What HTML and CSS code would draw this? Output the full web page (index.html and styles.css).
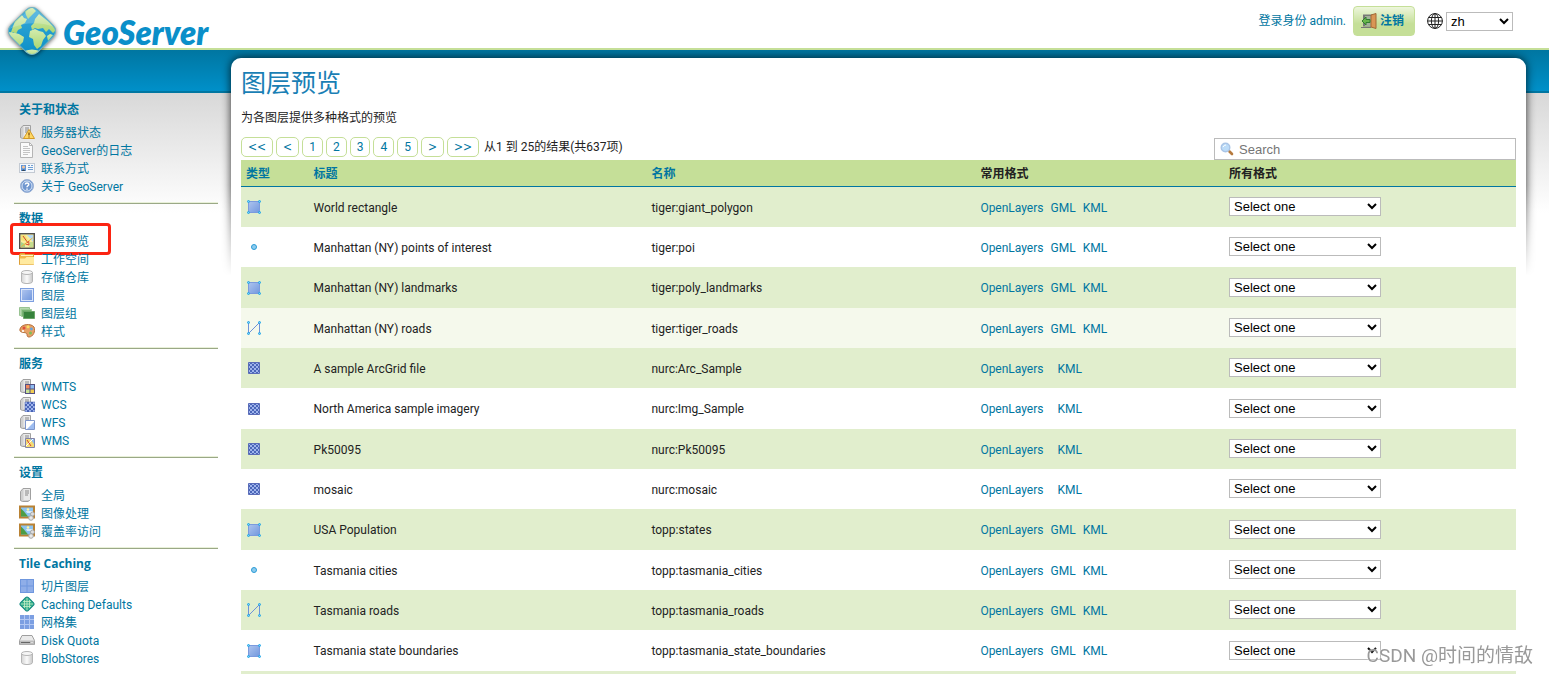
FILE: index.html
```html
<!DOCTYPE html>
<html lang="zh">
<head>
<meta charset="utf-8">
<title>GeoServer: 图层预览</title>
<link rel="stylesheet" href="styles.css">
</head>
<body>
<svg class="defs" aria-hidden="true">
  <defs>
    <linearGradient id="g-blue" x1="0" y1="0" x2="1" y2="1"><stop offset="0" stop-color="#aec4ee"/><stop offset="1" stop-color="#7298de"/></linearGradient>
    <linearGradient id="g-grey" x1="0" y1="0" x2="1" y2="0"><stop offset="0" stop-color="#d4d4d4"/><stop offset=".5" stop-color="#fafafa"/><stop offset="1" stop-color="#c8c8c8"/></linearGradient>
    <linearGradient id="g-sea" x1="0" y1="0" x2="0" y2="1"><stop offset="0" stop-color="#3aabda"/><stop offset="1" stop-color="#0a8ec6"/></linearGradient>
    <linearGradient id="g-land" x1="0" y1="0" x2="0" y2="1"><stop offset="0" stop-color="#d3ecae"/><stop offset="1" stop-color="#a9d672"/></linearGradient>
    <pattern id="p-check" width="4" height="4" patternUnits="userSpaceOnUse"><rect width="4" height="4" fill="#4a66b8"/><path d="M0 0h2v2H0zM2 2h2v2H2z" fill="#9fb4ec"/></pattern>
    <clipPath id="c-globe"><rect x="6" y="6" width="38" height="38" rx="8" transform="rotate(45 25 25)"/></clipPath>
    <symbol id="server" viewBox="0 0 16 16"><path d="M1.500 4.500 4 1.500h7.500v11L9 14.500H3.500l-2-1z" fill="#cfcfcf" stroke="#a0a0a0"/><path d="M4.500 2h6.500v11H4.500z" fill="#e9e9e9"/><path d="M6 4h4M6 6h4M6 8h3" stroke="#888"/></symbol>
    <symbol id="status" viewBox="0 0 16 16"><use href="#server"/><path d="M10 5.500 15.500 14.500H4.500z" fill="#ffd863" stroke="#d39a26" stroke-linejoin="round"/><path d="M10 8.500v3M10 12.500v1" stroke="#7d4b08" stroke-width="1.300"/></symbol>
    <symbol id="page" viewBox="0 0 16 16"><path d="M1.500.5h9l3 3v12h-12z" fill="#fafafa" stroke="#b5b5b5"/><path d="M10.500.5v3h3" fill="none" stroke="#b5b5b5"/><path d="M4 4.500h5M4 6.500h7M4 8.500h7M4 10.500h7M4 12.500h5" stroke="#c4c4c4"/></symbol>
    <symbol id="card" viewBox="0 0 16 16"><rect x=".5" y="3.500" width="15" height="9" fill="#f5f8fc" stroke="#c3cad3"/><rect x="2" y="5" width="5" height="6" fill="#5d96db"/><circle cx="4.500" cy="7" r="1.500" fill="#f5c49a"/><path d="M2.500 11q2-3 4 0z" fill="#345"/><path d="M9 5.500h2M12 5.500h2M9 7.500h5M9 9.500h5" stroke="#6f9fd3"/></symbol>
    <symbol id="help" viewBox="0 0 16 16"><circle cx="8" cy="8" r="6.500" fill="#6f96cf" stroke="#9db3d6"/><circle cx="8" cy="8" r="5" fill="none" stroke="#dbe7f8"/><path d="M6.300 6.500c.2-2.300 3.600-2 3.400.1C9.600 7.800 8 7.800 8 9.200M8 10.500v1.300" fill="none" stroke="#fff" stroke-width="1.500"/></symbol>
    <symbol id="map" viewBox="0 0 16 16"><rect x=".7" y=".7" width="14.600" height="14.600" fill="#f8ec9c" stroke="#4f4f4f" stroke-width="1.400"/><path d="M8 2h6v7z" fill="#b4d9f4"/><path d="M2 2h4l3 5-4 1-3-1z" fill="#f3e277"/><path d="M2 9l4 2v3H2z" fill="#a9d18a"/><path d="M11 9h3v5h-4z" fill="#c4dd8e"/><path d="M2.500 13.500 13.500 5" stroke="#f4b733"/><path d="M4 3l5 7M6.500 11l3.500 1-.3-4" fill="none" stroke="#d6452c"/></symbol>
    <symbol id="folder" viewBox="0 0 16 16"><path d="M.5 3.500 1.500 2.500h4l1 1h8v10H.5z" fill="#f2b84b" stroke="#dd9f37"/><path d="M1 7.500h5l1.500-1.500H15v7.500H1z" fill="#ffeaa0"/><path d="M2 4.500h12" stroke="#fff3cb"/></symbol>
    <symbol id="db" viewBox="0 0 16 16"><path d="M2.500 3.500v9c0 2.700 11 2.700 11 0v-9" fill="url(#g-grey)" stroke="#b5b5b5"/><ellipse cx="8" cy="3.500" rx="5.500" ry="2" fill="#f5f5f5" stroke="#b5b5b5"/></symbol>
    <symbol id="layer" viewBox="0 0 16 16"><rect x="1.500" y="1.500" width="13" height="13" fill="#dbe6fa" stroke="#7d9fe0"/><rect x="3" y="3" width="10" height="10" fill="url(#g-blue)"/></symbol>
    <symbol id="layers" viewBox="0 0 16 16"><path d="M.5 2.500h10v8H.5z" fill="#b6d9b0" stroke="#98c392"/><path d="M2.500 4.500h10v7h-10z" fill="#78b573" stroke="#9ccb96"/><path d="M4.500 6.500h11v7h-11z" fill="#36833c" stroke="#6aa568"/></symbol>
    <symbol id="palette" viewBox="0 0 16 16"><path d="M1 6C2 1 12 0 15 4c2 4-1 10-5 10-3 0-1-3-3-4S0 10 1 6z" fill="#e6a267" stroke="#b6703c"/><circle cx="5" cy="5" r="1.500" fill="#e04d3a"/><circle cx="9" cy="3.800" r="1.500" fill="#f8df62"/><circle cx="12.400" cy="6" r="1.400" fill="#60a5e5"/><circle cx="11.500" cy="10" r="1.500" fill="#7dbf57"/><circle cx="4" cy="8" r="1.100" fill="#fff"/></symbol>
    <symbol id="wmts" viewBox="0 0 16 16"><use href="#server"/><path d="M6 6h10v10H6z" fill="#555082"/><path d="M7 7h3.500v3.500H7z" fill="#f28b5d"/><path d="M11.500 7H15v3.500h-3.500z" fill="#8ebcf1"/><path d="M7 11.500h3.500V15H7z" fill="#c8e294"/><path d="M11.500 11.500H15V15h-3.500z" fill="#f2cd51"/></symbol>
    <symbol id="wcs" viewBox="0 0 16 16"><use href="#server"/><path d="M6 6h10v10H6z" fill="url(#p-check)" stroke="#4059a8" stroke-width=".5"/></symbol>
    <symbol id="wfs" viewBox="0 0 16 16"><use href="#server"/><path d="M6.500 6.500h9v9h-9z" fill="#fff" stroke="#7e96cb"/><path d="M15 8v7H8z" fill="#9dbcf0"/></symbol>
    <symbol id="wms" viewBox="0 0 16 16"><use href="#server"/><path d="M6.500 6.500h9v9h-9z" fill="#f5dc73" stroke="#8383a8"/><path d="M11 7h4v5z" fill="#8cbcf1"/><path d="M7 14l7-7" stroke="#fff"/><path d="M8 8l4 6" stroke="#d6402f"/></symbol>
    <symbol id="image" viewBox="0 0 16 16"><path d="M1 1.500h14v11H1z" fill="#8cc4f2" stroke="#b98234" stroke-width="2"/><path d="M2 3.500v8h7l-4-5z" fill="#4d9d46"/><path d="M7 6h7v2H8z" fill="#d8ecfb"/><circle cx="9" cy="4.500" r="1.300" fill="#fff4a2"/><circle cx="13.500" cy="9" r="2" fill="#dedede" stroke="#a8a8a8"/><circle cx="12" cy="13" r="2.300" fill="#e8e8e8" stroke="#a8a8a8"/></symbol>
    <symbol id="tiles" viewBox="0 0 16 16"><path d="M1 1h14v14H1z" fill="#6f97de"/><path d="M2 2h5.500v5.500H2zM8.500 2H14v5.500H8.500zM2 8.500h5.500V14H2zM8.500 8.500H14V14H8.500z" fill="#8faee8"/></symbol>
    <symbol id="grid" viewBox="0 0 16 16"><path d="M1 1h14v14H1z" fill="#7c9fe2"/><path d="M5.500 1v14M10.500 1v14M1 5.500h14M1 10.500h14" stroke="#b3c8f3"/></symbol>
    <symbol id="cache" viewBox="0 0 16 16"><rect x="2.500" y="2.500" width="11" height="11" rx="2" transform="rotate(45 8 8)" fill="#35ae8c" stroke="#168a83"/><path d="M5.500 4v8M8 2v12M10.500 4v8M4 5.500h8M2 8h12M4 10.500h8" stroke="#c6edc5" stroke-width=".8"/></symbol>
    <symbol id="disk" viewBox="0 0 16 16"><path d="M3 3.500h10l2.500 5v4H.5v-4z" fill="#eaeaea" stroke="#9f9f9f"/><path d="M1 8.500h14v4H1z" fill="#bcbcbc"/><path d="M2 10.500h9" stroke="#666"/><path d="M12.500 10.500h1" stroke="#fff"/></symbol>
    <symbol id="polygon" viewBox="0 0 16 16"><path d="M2.500 2.500h11v11h-11z" fill="url(#g-blue)" stroke="#7b9ade"/><g fill="#7fd0f7" stroke="#1ca4e8"><circle cx="2.500" cy="2.500" r="1"/><circle cx="13.500" cy="2.500" r="1"/><circle cx="2.500" cy="13.500" r="1"/><circle cx="13.500" cy="13.500" r="1"/></g></symbol>
    <symbol id="point" viewBox="0 0 16 16"><circle cx="8" cy="8" r="2.500" fill="#8dcbee" stroke="#2b9cd6"/></symbol>
    <symbol id="line" viewBox="0 0 16 16"><path d="M2.500 2.500v11l11-11v11" fill="none" stroke="#6f92d8"/><g fill="#7fd0f7" stroke="#1ca4e8"><circle cx="2.500" cy="2.500" r="1"/><circle cx="13.500" cy="2.500" r="1"/><circle cx="2.500" cy="13.500" r="1"/><circle cx="13.500" cy="13.500" r="1"/></g></symbol>
    <symbol id="raster" viewBox="0 0 16 16"><path d="M2.500 2.500h11v11h-11z" fill="url(#p-check)" stroke="#5a6cb8"/></symbol>
  </defs>
</svg>

<header class="header">
  <a class="logo" href="#">
    <svg class="logo-mark" viewBox="0 0 50 50" aria-hidden="true">
      <g clip-path="url(#c-globe)">
        <path d="M0 0h50v50H0z" fill="url(#g-sea)"/>
        <g fill="url(#g-land)">
          <path d="M8 15 15 9l2 3 3 1-2 4-4 2 1 3-4 2-2 4-3-2-3 3z"/>
          <path d="M18 5l7-4 4 4-5 5-3 3-2-4z"/>
          <path d="M2 26l6 1 4 1 5 3-1 5-4 4-1 4L0 32z"/>
          <path d="M28 13l4-5 10 8 7 8-3 3-4-4-3 3-3-4-5 1-3-1-3 2-1-4 3-3z"/>
          <path d="M23 25l5-2 4 2 4 1 3 4-3 4-2 6-4 3-3-4-1-6-4-2z"/>
          <path d="M40 30l3-2 3 1-5 6z"/>
          <path d="M15 46q10-5 20 0l-10 6z"/>
        </g>
        <path d="M25 0 50 22Q26 12 2 23z" fill="#fff" opacity=".2"/>
      </g>
      <rect x="6" y="6" width="38" height="38" rx="8" transform="rotate(45 25 25)" fill="none" stroke="#6fb3c4"/>
    </svg>
    <span class="logo-text">GeoServer</span>
  </a>
  <div class="account">
    <span class="who">登录身份 admin.</span>
    <button class="logout" type="button">
      <svg class="icon" viewBox="0 0 16 16" aria-hidden="true"><path d="M2 1.500h9v12H2z" fill="#787878"/><path d="M4 3h6v10H4z" fill="#a2b29a"/><path d="M10 2l5-1.500v15L10 14z" fill="#d99655" stroke="#a26834"/><path d="M1 8l4-4v2.500h4v3H5V12z" fill="#69b64c" stroke="#327d30"/><path d="M0 14.500h10" stroke="#777"/></svg>
      注销
    </button>
    <label class="lang">
      <svg class="icon" viewBox="0 0 16 16" role="img" aria-label="语言"><g fill="none" stroke="#222"><circle cx="8" cy="8" r="7.400"/><ellipse cx="8" cy="8" rx="3.600" ry="7.400"/><path d="M8 .5v15M.5 8h15M1.800 4.500h12.400M1.800 11.500h12.400"/></g></svg>
      <select class="select lang-select"><option>zh</option></select>
    </label>
  </div>
</header>

<div class="layout">
  <nav class="sidebar">
    <section class="group">
      <h2>关于和状态</h2>
      <ul>
        <li><a href="#"><svg class="icon"><use href="#status"/></svg>服务器状态</a></li>
        <li><a href="#"><svg class="icon"><use href="#page"/></svg>GeoServer的日志</a></li>
        <li><a href="#"><svg class="icon"><use href="#card"/></svg>联系方式</a></li>
        <li><a href="#"><svg class="icon"><use href="#help"/></svg>关于 GeoServer</a></li>
      </ul>
    </section>
    <section class="group">
      <h2>数据</h2>
      <ul>
        <li class="marked"><a href="#"><svg class="icon"><use href="#map"/></svg>图层预览</a></li>
        <li><a href="#"><svg class="icon"><use href="#folder"/></svg>工作空间</a></li>
        <li><a href="#"><svg class="icon"><use href="#db"/></svg>存储仓库</a></li>
        <li><a href="#"><svg class="icon"><use href="#layer"/></svg>图层</a></li>
        <li><a href="#"><svg class="icon"><use href="#layers"/></svg>图层组</a></li>
        <li><a href="#"><svg class="icon"><use href="#palette"/></svg>样式</a></li>
      </ul>
    </section>
    <section class="group">
      <h2>服务</h2>
      <ul>
        <li><a href="#"><svg class="icon"><use href="#wmts"/></svg>WMTS</a></li>
        <li><a href="#"><svg class="icon"><use href="#wcs"/></svg>WCS</a></li>
        <li><a href="#"><svg class="icon"><use href="#wfs"/></svg>WFS</a></li>
        <li><a href="#"><svg class="icon"><use href="#wms"/></svg>WMS</a></li>
      </ul>
    </section>
    <section class="group">
      <h2>设置</h2>
      <ul>
        <li><a href="#"><svg class="icon"><use href="#server"/></svg>全局</a></li>
        <li><a href="#"><svg class="icon"><use href="#image"/></svg>图像处理</a></li>
        <li><a href="#"><svg class="icon"><use href="#image"/></svg>覆盖率访问</a></li>
      </ul>
    </section>
    <section class="group">
      <h2>Tile Caching</h2>
      <ul>
        <li><a href="#"><svg class="icon"><use href="#tiles"/></svg>切片图层</a></li>
        <li><a href="#"><svg class="icon"><use href="#cache"/></svg>Caching Defaults</a></li>
        <li><a href="#"><svg class="icon"><use href="#grid"/></svg>网格集</a></li>
        <li><a href="#"><svg class="icon"><use href="#disk"/></svg>Disk Quota</a></li>
        <li><a href="#"><svg class="icon"><use href="#db"/></svg>BlobStores</a></li>
      </ul>
    </section>
  </nav>

  <div class="panel">
    <div class="shade"><div class="shade-box"></div></div>
    <main class="content">
      <h1>图层预览</h1>
      <p class="intro">为各图层提供多种格式的预览</p>
      <div class="toolbar">
        <div class="pager">
          <a class="arrow" href="#">&lt;&lt;</a><a class="arrow" href="#">&lt;</a><a href="#">1</a><a href="#">2</a><a href="#">3</a><a href="#">4</a><a href="#">5</a><a class="arrow" href="#">&gt;</a><a class="arrow" href="#">&gt;&gt;</a>
          <span>从1 到 25的结果(共637项)</span>
        </div>
        <label class="search">
          <svg class="icon" viewBox="0 0 16 16" aria-hidden="true"><path d="M10.500 10.500l2.500 2.500" stroke="#b67a3d" stroke-width="2.600" stroke-linecap="round"/><circle cx="6.500" cy="6.500" r="4.300" fill="#bcdcf8" stroke="#a9c4e6" stroke-width="1.400"/><path d="M4 6q1-2 3-2" fill="none" stroke="#fff"/></svg>
          <input type="text" placeholder="Search" aria-label="Search">
        </label>
      </div>
      <table class="layers">
        <thead>
          <tr><th class="c-type"><a href="#">类型</a></th><th class="c-title"><a href="#">标题</a></th><th class="c-name"><a href="#">名称</a></th><th class="c-common">常用格式</th><th>所有格式</th></tr>
        </thead>
        <tbody>
          <tr><td><svg class="icon"><use href="#polygon"/></svg></td><td>World rectangle</td><td>tiger:giant_polygon</td><td><div class="formats"><a href="#">OpenLayers</a><a href="#">GML</a><a href="#">KML</a></div></td><td><select class="select" aria-label="所有格式"><option>Select one</option></select></td></tr>
          <tr><td><svg class="icon"><use href="#point"/></svg></td><td>Manhattan (NY) points of interest</td><td>tiger:poi</td><td><div class="formats"><a href="#">OpenLayers</a><a href="#">GML</a><a href="#">KML</a></div></td><td><select class="select" aria-label="所有格式"><option>Select one</option></select></td></tr>
          <tr><td><svg class="icon"><use href="#polygon"/></svg></td><td>Manhattan (NY) landmarks</td><td>tiger:poly_landmarks</td><td><div class="formats"><a href="#">OpenLayers</a><a href="#">GML</a><a href="#">KML</a></div></td><td><select class="select" aria-label="所有格式"><option>Select one</option></select></td></tr>
          <tr class="current"><td><svg class="icon"><use href="#line"/></svg></td><td>Manhattan (NY) roads</td><td>tiger:tiger_roads</td><td><div class="formats"><a href="#">OpenLayers</a><a href="#">GML</a><a href="#">KML</a></div></td><td><select class="select" aria-label="所有格式"><option>Select one</option></select></td></tr>
          <tr><td><svg class="icon"><use href="#raster"/></svg></td><td>A sample ArcGrid file</td><td>nurc:Arc_Sample</td><td><div class="formats"><a href="#">OpenLayers</a><span></span><a href="#">KML</a></div></td><td><select class="select" aria-label="所有格式"><option>Select one</option></select></td></tr>
          <tr><td><svg class="icon"><use href="#raster"/></svg></td><td>North America sample imagery</td><td>nurc:Img_Sample</td><td><div class="formats"><a href="#">OpenLayers</a><span></span><a href="#">KML</a></div></td><td><select class="select" aria-label="所有格式"><option>Select one</option></select></td></tr>
          <tr><td><svg class="icon"><use href="#raster"/></svg></td><td>Pk50095</td><td>nurc:Pk50095</td><td><div class="formats"><a href="#">OpenLayers</a><span></span><a href="#">KML</a></div></td><td><select class="select" aria-label="所有格式"><option>Select one</option></select></td></tr>
          <tr><td><svg class="icon"><use href="#raster"/></svg></td><td>mosaic</td><td>nurc:mosaic</td><td><div class="formats"><a href="#">OpenLayers</a><span></span><a href="#">KML</a></div></td><td><select class="select" aria-label="所有格式"><option>Select one</option></select></td></tr>
          <tr><td><svg class="icon"><use href="#polygon"/></svg></td><td>USA Population</td><td>topp:states</td><td><div class="formats"><a href="#">OpenLayers</a><a href="#">GML</a><a href="#">KML</a></div></td><td><select class="select" aria-label="所有格式"><option>Select one</option></select></td></tr>
          <tr><td><svg class="icon"><use href="#point"/></svg></td><td>Tasmania cities</td><td>topp:tasmania_cities</td><td><div class="formats"><a href="#">OpenLayers</a><a href="#">GML</a><a href="#">KML</a></div></td><td><select class="select" aria-label="所有格式"><option>Select one</option></select></td></tr>
          <tr><td><svg class="icon"><use href="#line"/></svg></td><td>Tasmania roads</td><td>topp:tasmania_roads</td><td><div class="formats"><a href="#">OpenLayers</a><a href="#">GML</a><a href="#">KML</a></div></td><td><select class="select" aria-label="所有格式"><option>Select one</option></select></td></tr>
          <tr><td><svg class="icon"><use href="#polygon"/></svg></td><td>Tasmania state boundaries</td><td>topp:tasmania_state_boundaries</td><td><div class="formats"><a href="#">OpenLayers</a><a href="#">GML</a><a href="#">KML</a></div></td><td><select class="select" aria-label="所有格式"><option>Select one</option></select></td></tr>
          <tr><td></td><td></td><td></td><td></td><td></td></tr>
        </tbody>
      </table>
    </main>
  </div>
</div>
<div class="watermark">CSDN @时间的情敌</div>
</body>
</html>
```
FILE: styles.css
```css
*, *::before, *::after { box-sizing: border-box; }

body {
  margin: 0;
  color: #222;
  font: 12px/18px Roboto, "Noto Sans CJK SC", sans-serif;
  background: #fff;
}

a { color: #0076a1; text-decoration: none; }
ul { list-style: none; margin: 0; padding: 0; }
.defs { position: absolute; width: 0; height: 0; }
.icon { width: 16px; height: 16px; flex: none; display: block; }

/* Header */
.header {
  height: 50px;
  display: flex;
  justify-content: space-between;
  border-bottom: 2px solid #c5df98;
  background: #fff;
}
.logo { display: flex; padding: 6px 0 0 7px; gap: 6px; }
.logo-mark {
  width: 50px;
  height: 50px;
  position: relative;
  z-index: 2;
  filter: drop-shadow(0 1px 2px rgba(0, 0, 0, .6));
}
.logo-text { font: italic 800 33px/52px Lato, sans-serif; color: #0a8fc9; }
.account { display: flex; align-items: center; padding: 0 36px 6px 0; color: #0076a1; }
.logout {
  display: flex;
  align-items: center;
  gap: 3px;
  height: 30px;
  margin: 0 12px 0 7px;
  padding: 0 10px 0 7px;
  border: 1px solid #c5df98;
  border-radius: 4px;
  background: linear-gradient(#edf6dc, #c5df98 60%);
  color: #0076a1;
  font: bold 12px/18px "Open Sans", "Noto Sans CJK SC", sans-serif;
}
.lang { display: flex; align-items: center; gap: 3px; }
.select {
  width: 152px;
  height: 19px;
  padding: 0;
  border: 1px solid #bbb;
  border-radius: 0;
  background-color: #fff;
  color: #000;
  font: 13px "Liberation Sans", Arial, sans-serif;
}
.lang-select { width: 67px; }

/* Page frame */
.layout {
  display: flex;
  background:
    linear-gradient(#0076a1, #0090c9) 0 0 / 100% 41px no-repeat,
    linear-gradient(#0076a1, #0076a1) 0 41px / 100% 2px no-repeat,
    linear-gradient(#d8d8d8, #fff) 0 43px / 100% 120px no-repeat;
}
.sidebar { width: 231px; flex: none; padding: 46px 13px 0 14px; }
.group {
  padding: 4px 0 7px 5px;
  border-bottom: 1px solid #9aa886;
  box-shadow: inset 0 -1px #e8f0d8;
  margin-bottom: 1px;
}
.group:last-child { border: 0; box-shadow: none; margin: 0; padding-bottom: 0; }
.group h2 {
  margin: 0 0 4px;
  color: #0076a1;
  font: bold 12px/20px "Open Sans", "Noto Sans CJK SC", sans-serif;
}
.group li { position: relative; height: 18px; }
.group li a { display: flex; gap: 6px; line-height: 18px; }
.marked::after {
  content: "";
  position: absolute;
  inset: -10px auto auto -9px;
  width: 101px;
  height: 32px;
  border: 3px solid #fb2412;
  border-radius: 4px;
  pointer-events: none;
}

.panel { position: relative; flex: 1; min-width: 0; margin: 8px 23px 0 0; }
.shade {
  position: absolute;
  inset: -8px -12px auto;
  height: 226px;
  padding: 8px 12px 0;
  overflow: hidden;
  mask-image: linear-gradient(#000 60%, transparent);
}
.shade-box { height: 300px; border-radius: 10px; box-shadow: 0 0 10px rgba(0, 0, 0, .8); }
.content { position: relative; padding: 8px 10px 0; border-radius: 10px; background: #fff; }
.content h1 { margin: 0; font-size: 25px; line-height: 36px; font-weight: 400; color: #1a7fb5; }
.intro { margin: 7px 0 10px; }

/* Pager and search */
.toolbar { display: flex; justify-content: space-between; align-items: flex-end; }
.pager { display: flex; gap: 3px; align-items: center; padding-bottom: 3px; }
.pager a {
  padding: 0 6px;
  border: 1px solid #c5df98;
  border-radius: 5px;
}
.pager .arrow { font-family: "DejaVu Sans Condensed", "DejaVu Sans", sans-serif; }
.pager span { padding-left: 2px; }
.search {
  display: flex;
  align-items: center;
  width: 302px;
  height: 22px;
  padding-left: 4px;
  border: 1px solid #bbb;
}
.search input {
  flex: 1;
  min-width: 0;
  padding: 0 4px;
  border: 0;
  outline: 0;
  background: transparent;
  font: 13px "Liberation Sans", Arial, sans-serif;
}

/* Layer table */
.layers { width: 100%; border-spacing: 0; table-layout: fixed; }
.layers th {
  height: 27px;
  padding: 1px 5px 0;
  text-align: left;
  background: #c5df98;
  border-bottom: 1px solid #0076a1;
}
.c-type { width: 5.3%; }
.c-title { width: 26.5%; }
.c-name { width: 25.8%; }
.c-common { width: 19.5%; }
.layers td { height: 40px; padding: 1px 5px 0; }
.layers td:first-child { padding-top: 0; }
.layers td:last-child { padding: 0 5px 1px; }
.layers tr:nth-child(3n) td { height: 41px; }
.layers tbody tr:nth-child(odd) { background: #e1eecd; }
.layers tbody .current { background: #f5f9ec; }
.layers .select { display: block; }
.formats { display: flex; gap: 7px; }

.watermark {
  position: fixed;
  right: 16px;
  bottom: 4px;
  color: #999;
  font: 19px/28px Roboto, "Noto Sans CJK SC", sans-serif;
  text-shadow: 0 0 2px #fff;
}
```
